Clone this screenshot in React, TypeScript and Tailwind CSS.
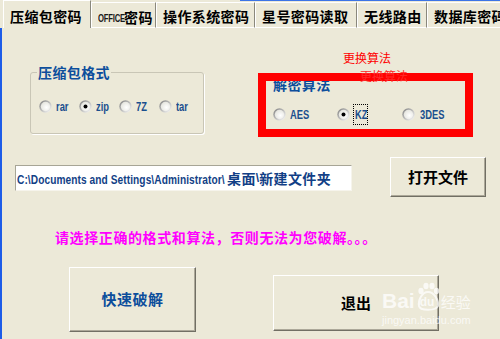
import React from "react";

const CJK = "font-['Noto_Sans_CJK_SC','Noto_Sans_CJK_JP',sans-serif]";
const LAT = "font-['Liberation_Sans','Noto_Sans_CJK_SC',sans-serif]";

function Radio({ checked }: { checked?: boolean }) {
  return (
    <svg width="13" height="13" viewBox="0 0 13 13" className="shrink-0">
      <defs>
        <linearGradient id="rg" x1="0" y1="0" x2="1" y2="1">
          <stop offset="0" stopColor="#7c7c7c" />
          <stop offset="0.55" stopColor="#c4c4c4" />
          <stop offset="1" stopColor="#ffffff" />
        </linearGradient>
        <radialGradient id="ri" cx="0.6" cy="0.6" r="0.6">
          <stop offset="0" stopColor="#ffffff" />
          <stop offset="1" stopColor="#e6e6e0" />
        </radialGradient>
      </defs>
      <circle cx="6.5" cy="6.5" r="6.2" fill="url(#rg)" />
      <circle cx="6.5" cy="6.5" r="4.7" fill="url(#ri)" />
      {checked && <circle cx="6.5" cy="6.5" r="2" fill="#000" />}
    </svg>
  );
}

function Narrow({ children, className = "" }: { children: React.ReactNode; className?: string }) {
  return (
    <span className={`inline-block origin-left whitespace-nowrap ${LAT} ${className}`}>
      {children}
    </span>
  );
}

const tabs = [
  { label: "压缩包密码", w: "w-[88px]", sel: true },
  { label: "OFFICE密码", w: "w-[65px]" },
  { label: "操作系统密码", w: "w-[99px]" },
  { label: "星号密码读取", w: "w-[102px]" },
  { label: "无线路由", w: "w-[70px]" },
  { label: "数据库密码", w: "w-[90px]" },
];

const btn =
  "flex items-center justify-center bg-[#ECE9D8] border border-t-white border-l-white border-r-[#716f64] border-b-[#716f64] shadow-[inset_-1px_-1px_0_#aca899]";

const radioText = "text-[13px] leading-[13px] font-bold text-[#1a4f8e] scale-x-[0.72]";

export default function App() {
  return (
    <div className="relative w-[500px] h-[339px] overflow-hidden bg-[#ECE9D8]">
      {/* Tabs */}
      <div className="flex h-[28px] items-end pl-[3px]">
        {tabs.map((t, i) => (
          <div
            key={i}
            className={`${t.w} shrink-0 overflow-hidden ${
              t.sel
                ? "h-[28px] pt-[7px] border-l border-t border-white border-r border-r-[#8a887c]"
                : "h-[26px] pt-[5px] border-l border-t border-b border-white border-r border-r-[#8a887c]"
            } pl-[6px] text-[14px] leading-[16px] font-bold text-black tracking-[0.4px] whitespace-nowrap ${CJK}`}
          >
            {t.label.startsWith("OFFICE") ? (
              <span className="flex items-center">
                <span className="w-[26px] inline-block">
                  <span className={`inline-block origin-left scale-x-[0.7] ${LAT} text-[11px] leading-[16px] tracking-[-0.3px] text-[#1a1a1a]`}>
                    OFFICE
                  </span>
                </span>
                <span>密码</span>
              </span>
            ) : (
              t.label
            )}
          </div>
        ))}
      </div>

      {/* Body */}
      <div className="flex flex-col">
        {/* Row 1: group boxes */}
        <div className="flex items-start mt-[44px]">
          <div className="relative ml-[30px] w-[174px] h-[62px] border border-[#c9c6b6] rounded-[3px] shadow-[1px_1px_0_#ffffff]">
            <div
              className={`absolute left-[6px] top-[-9px] px-[1px] bg-[#ECE9D8] text-[14px] leading-[16px] font-bold text-[#0d4e9c] tracking-[0.4px] ${CJK}`}
            >
              压缩包格式
            </div>
            <div className="flex items-center pt-[27px] pl-[8px]">
              {[
                { l: "rar" },
                { l: "zip", c: true },
                { l: "7Z" },
                { l: "tar" },
              ].map((r, i) => (
                <div key={i} className="w-[40px] flex items-center gap-[4px]">
                  <Radio checked={r.c} />
                  <Narrow className={radioText}>{r.l}</Narrow>
                </div>
              ))}
            </div>
          </div>

          <div className="relative ml-[61px] mt-[11px] w-[200px] h-[46px] border border-transparent">
            <div
              className={`absolute left-[6px] top-[-8px] px-[1px] text-[14px] leading-[16px] font-bold text-[#0d4e9c] tracking-[0.4px] ${CJK}`}
            >
              解密算法
            </div>
            <div className="flex items-center pt-[20px] pl-[7px]">
              <div className="w-[64px] flex items-center gap-[4px]">
                <Radio />
                <Narrow className={radioText}>AES</Narrow>
              </div>
              <div className="w-[65px] flex items-center gap-[3px]">
                <Radio checked />
                <span className="w-[15px] h-[21px] border border-dotted border-black flex items-center pl-[1px]">
                  <Narrow className={radioText}>KZ</Narrow>
                </span>
              </div>
              <div className="flex items-center gap-[5px]">
                <Radio />
                <Narrow className={radioText}>3DES</Narrow>
              </div>
            </div>
          </div>
        </div>

        {/* Row 2: path + open button */}
        <div className="flex items-start mt-[23px]">
          <div className="ml-[15px] mt-[8px] w-[337px] h-[26px] bg-white border border-[#a7a596] border-r-[#f6f4ec] border-b-[#f6f4ec] flex items-center pl-[1px] overflow-hidden whitespace-nowrap">
            <span className="inline-block w-[210px] shrink-0">
              <Narrow className="text-[13px] font-bold text-[#123f86] tracking-[0.1px] scale-x-[0.78]">
                C:\Documents and Settings\Administrator\
              </Narrow>
            </span>
            <span className={`${CJK} text-[14px] font-bold text-[#123f86] tracking-[0.4px]`}>桌面</span>
            <span className={`${LAT} text-[12px] font-bold text-[#123f86]`}>\</span>
            <span className={`${CJK} text-[14px] font-bold text-[#123f86] tracking-[0.4px]`}>新建文件夹</span>
          </div>
          <div className={`ml-[38px] w-[96px] h-[40px] ${btn}`}>
            <span className={`${CJK} text-[15px] font-bold text-black`}>打开文件</span>
          </div>
        </div>

        {/* Row 3: hint */}
        <div
          className={`mt-[32px] ml-[55px] text-[14px] leading-[16px] font-bold text-[#ff00ff] tracking-[0.6px] whitespace-nowrap ${CJK}`}
        >
          请选择正确的格式和算法，否则无法为您破解。。。
        </div>

        {/* Row 4: action buttons */}
        <div className="flex items-start mt-[22px]">
          <div className={`ml-[69px] w-[127px] h-[65px] ${btn}`}>
            <span className={`${CJK} text-[15px] font-bold text-[#0d4e9c] tracking-[0.5px]`}>快速破解</span>
          </div>
          <div className={`ml-[77px] mt-[8px] w-[166px] h-[56px] ${btn}`}>
            <span className={`${CJK} text-[15px] font-bold text-black`}>退出</span>
          </div>
        </div>
      </div>

      {/* Window frame edges */}
      <div className="absolute left-0 top-[28px] bottom-0 w-[2px] bg-[#1d5ce8]" />
      <div className="absolute left-[240px] right-0 top-0 h-[1px] bg-[#3c74e6]" />

      {/* Red annotation */}
      <div className="absolute left-[258px] top-[73px] w-[215px] h-[64px] border-[8px] border-[#ff0000]" />
      <div className={`absolute left-[343px] top-[51px] text-[12px] leading-[14px] text-[#ff0000] ${CJK}`}>
        更换算法
      </div>
      <div className={`absolute left-[360px] top-[69px] text-[12px] leading-[14px] text-[#ff2a2a] ${CJK}`}>
        更换算法
      </div>

      {/* Baidu watermark */}
      <div className="absolute left-[382px] top-[282px] flex flex-col items-start opacity-75 pointer-events-none">
        <div className="flex items-end">
          <span className={`${LAT} text-[21px] leading-[22px] font-bold text-white`}>Bai</span>
          <div className="relative w-[24px] h-[30px] mx-[1px]">
            <svg width="24" height="30" viewBox="0 0 24 30" className="absolute left-0 top-0">
              <ellipse cx="5" cy="9" rx="2.6" ry="3.2" fill="#fff" />
              <ellipse cx="10" cy="4" rx="2.6" ry="3.2" fill="#fff" />
              <ellipse cx="16" cy="4" rx="2.6" ry="3.2" fill="#fff" />
              <ellipse cx="20.5" cy="9" rx="2.6" ry="3.2" fill="#fff" />
              <path d="M12 10 C 6 10, 2 18, 3 24 C 4 29, 20 29, 22 24 C 23 18, 18 10, 12 10 Z" fill="none" stroke="#fff" strokeWidth="2" />
            </svg>
            <span className={`absolute left-[4px] top-[14px] ${LAT} text-[12px] leading-[12px] font-bold text-white`}>du</span>
          </div>
          <span className={`${CJK} text-[15px] leading-[20px] text-white`}>经验</span>
        </div>
        <span className={`${LAT} text-[11px] leading-[12px] text-white mt-[2px]`}>jingyan.baidu.com</span>
      </div>
    </div>
  );
}
